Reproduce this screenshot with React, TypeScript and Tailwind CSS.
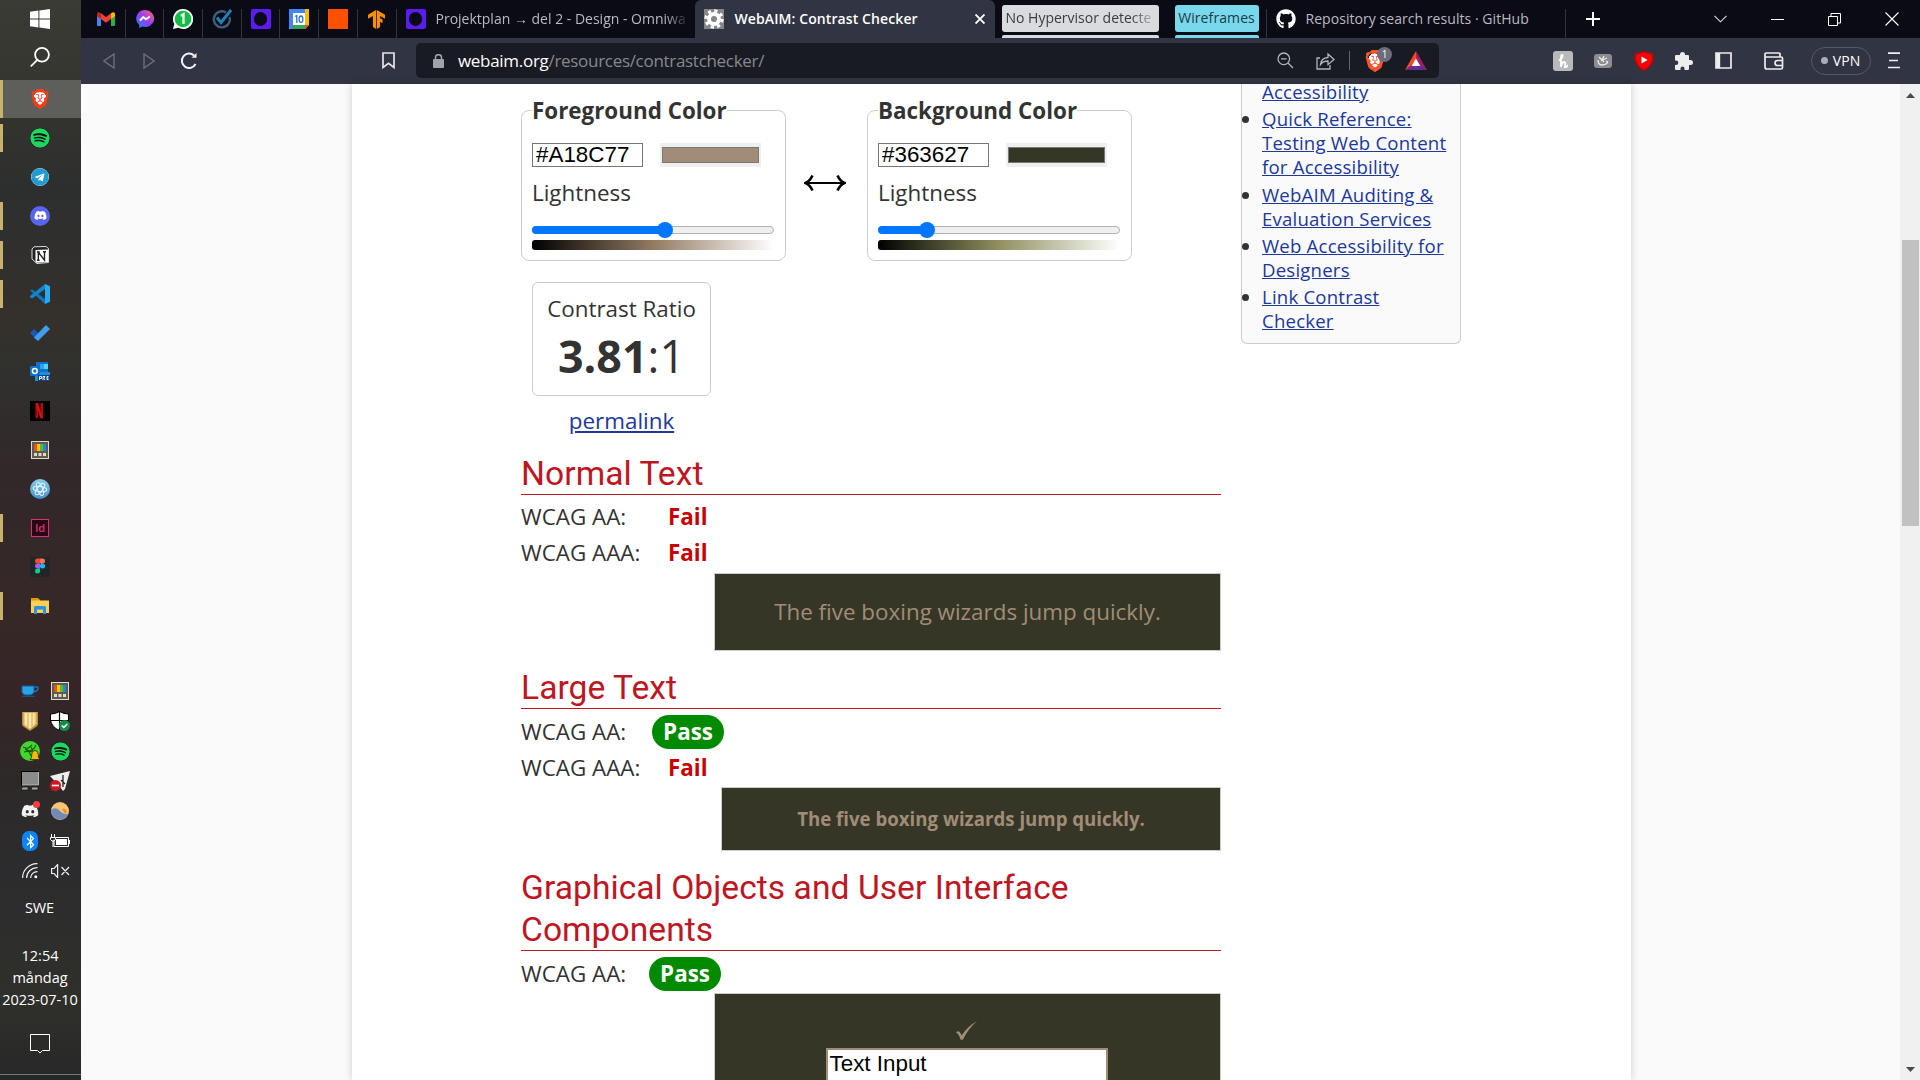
import type { ReactNode } from "react";
import { FaSpotify, FaTelegram, FaDiscord, FaGithub, FaBluetoothB } from "react-icons/fa";
import { SiBrave, SiTensorflow } from "react-icons/si";

/* ---------- taskbar icons ---------- */

const VsCode = () => (
  <svg width="20" height="20" viewBox="0 0 20 20">
    <path d="M0 6.600 2.200 5.400 15 15v5z" fill="#0a76c0" />
    <path d="M15 0v5L2.200 14.600 0 13.300V12z" fill="#1186d0" />
    <path d="M15 0l5 2.300v15.400L15 20z" fill="#29a9f3" />
  </svg>
);
const Todo = () => (
  <svg width="20" height="16" viewBox="0 0 20 16">
    <path d="M0 8l4-4 7 7-4 4.500z" fill="#1c57b8" />
    <path d="M4 12.500 16 0l4 4L8 16z" fill="#409fec" />
  </svg>
);
const Outlook = () => (
  <svg width="20" height="20" viewBox="0 0 20 20">
    <path d="M6 0h12v11H6z" fill="#1470c4" />
    <path d="M10 2h4v5h-4z" fill="#2aa6ea" />
    <path d="M14 2h4v5h-4z" fill="#55d0fb" />
    <path d="M5 10h15v9H5z" fill="#1a8fe0" />
    <rect y="4" width="10" height="10" rx="1" fill="#0f6fd0" />
    <circle cx="4.800" cy="9" r="2.400" fill="none" stroke="#fff" strokeWidth="1.500" />
    <rect x="8" y="13" width="12" height="6" fill="#123f80" />
    <path d="M9.500 18v-3.500h2v2h-2M13 18v-3.500h2l-1 2 1 1.500M18.500 14.500h-1.500v3h1.500M17 16h1.500" stroke="#fff" fill="none" strokeWidth=".9" />
  </svg>
);
const Netflix = () => (
  <svg width="20" height="20" viewBox="0 0 20 20">
    <path d="M0 0h20v20H0z" fill="#000" />
    <path d="M5.500 2H8v15l-2.500.4zM10.500 2H13v15.400L10.500 17z" fill="#b1060f" />
    <path d="M5.500 2H8l5 15.400-2.700-.4z" fill="#e50914" />
  </svg>
);
const PowerToys = () => (
  <svg width="18" height="18" viewBox="0 0 18 18">
    <path d="M0 0h18v18H0z" fill="#e5d9bf" />
    <path d="M1 1h16v16H1z" fill="#5d5a58" />
    <path d="M3 3h3v7H3z" fill="#e8501c" />
    <path d="M6 3h3v7H6z" fill="#fdc800" />
    <path d="M9 3h3v7H9z" fill="#62b82b" />
    <path d="M12 3h3v7h-3z" fill="#1b8be0" />
    <path d="M3 12h3v3H3zM7.500 12h3v3h-3zM12 12h3v3h-3z" fill="#e5d9bf" />
  </svg>
);
const Atom = () => (
  <svg width="20" height="20" viewBox="0 0 20 20">
    <defs>
      <linearGradient id="atom" x2="0" y2="1">
        <stop stopColor="#86cdee" />
        <stop offset="1" stopColor="#4a90cc" />
      </linearGradient>
    </defs>
    <circle cx="10" cy="10" r="10" fill="url(#atom)" />
    <g fill="none" stroke="#e4f4fc" strokeWidth="1">
      <ellipse cx="10" cy="10" rx="6.800" ry="2.600" transform="rotate(8 10 10)" />
      <ellipse cx="10" cy="10" rx="6.800" ry="2.600" transform="rotate(68 10 10)" />
      <ellipse cx="10" cy="10" rx="6.800" ry="2.600" transform="rotate(128 10 10)" />
    </g>
  </svg>
);
const InDesign = () => (
  <div className="flex h-[18px] w-[18px] items-center justify-center border border-[#d6327b] bg-[#2a0613] font-['Open_Sans'] text-[11px] leading-none font-semibold text-[#d6327b]">
    Id
  </div>
);
const Figma = () => (
  <svg width="20" height="20" viewBox="0 0 20 20">
    <path d="M0 0h20v20H0z" fill="#232626" />
    <path d="M10 1.500H7.500a2.500 2.500 0 000 5H10z" fill="#f24e1e" />
    <path d="M10 1.500h2.500a2.500 2.500 0 010 5H10z" fill="#ff7262" />
    <path d="M10 6.500H7.500a2.500 2.500 0 000 5H10z" fill="#a259ff" />
    <circle cx="12.500" cy="9" r="2.500" fill="#1abcfe" />
    <path d="M7.500 11.500H10V14a2.500 2.500 0 11-2.500-2.500z" fill="#0acf83" />
  </svg>
);
const Explorer = () => (
  <svg width="18" height="16" viewBox="0 0 18 16">
    <path d="M0 0h7l2 2v3H0z" fill="#e39a04" />
    <path d="M0 2.500h18V15H0z" fill="#fdd055" />
    <path d="M3 16V9l1-1h10l1 1v7h-3v-4.500H6V16z" fill="#2f8fe0" />
  </svg>
);
const NotionTile = () => (
  <svg width="18" height="18" viewBox="0 0 18 18">
    <path d="M1 3 3 .8 15 .5l2.500 2V16.500L6 17.500 1 13z" fill="#222" stroke="#ddd" strokeWidth="1" />
    <path d="M4.500 4 17 3.400V16L4.500 16.700z" fill="#fff" />
    <path d="M7.300 14.300V6.200l6.200 8V5.800M6 6h2.800M12 5.800h3M6 14.200h2.600" stroke="#222" strokeWidth="1.400" fill="none" />
  </svg>
);
const Cup = () => (
  <svg width="18" height="12" viewBox="0 0 18 12">
    <path d="M1 1h12v4a5 4 0 01-4 5H5a4 4 0 01-4-5z" fill="#27a4e8" stroke="#115e9e" />
    <path d="M13.500 2h2.500q1.500 0 1 2t-4.500 3" fill="none" stroke="#1778bd" strokeWidth="1.300" />
    <path d="M1 11.300h13" stroke="#115e9e" />
  </svg>
);
const GoldShield = () => (
  <svg width="16" height="20" viewBox="0 0 16 20">
    <path d="M0 1h16v12q0 2-2 3l-6 4-6-4q-2-1-2-3z" fill="#b98b3a" />
    <path d="M1.500 1.500h13V13L8 18.500 1.500 14z" fill="#edc673" />
    <path d="M3 2h2v12.500L3 13.500zM7 2h2v15H7zM11 2h1.500v12H11z" fill="#fbe8b4" />
  </svg>
);
const Defender = () => (
  <svg width="20" height="20" viewBox="0 0 20 20">
    <path d="M9.500.5q4 2.500 9 2.500v6q-1 7-9 10.500-8-3.500-9-10.500V3q5 0 9-2.500z" fill="#fff" stroke="#000" />
    <path d="M9.500 0v19M0 9.500h19" stroke="#000" strokeWidth="1.200" />
    <circle cx="14.500" cy="14.500" r="5.500" fill="#178a4a" />
    <path d="M11.800 14.500l2 2 3.500-3.600" stroke="#fff" fill="none" strokeWidth="1.500" />
  </svg>
);
const Razer = () => (
  <svg width="20" height="20" viewBox="0 0 20 20">
    <circle cx="10" cy="10" r="10" fill="#44d62c" />
    <path d="M3 6l4 1.500 2-1 3-2.500M16 4l-2 3.500-4 2.500-5-2M4 11l5-1 2 5M11 6l2 4M6 9l3 2 4-1" stroke="#145c0c" strokeWidth="1.100" fill="none" />
    <path d="M10 18.500l1.500-2q0-7 3.500-7t3.500 7l1.500 2z" fill="#fbb908" stroke="#222" strokeWidth=".8" />
  </svg>
);
const Computer = () => (
  <svg width="18" height="20" viewBox="0 0 18 20">
    <path d="M.5.5h17v14H.5z" fill="#8b8b8b" stroke="#000" />
    <path d="M1 14h16.500V1" stroke="#b5b5b5" fill="none" />
    <path d="M1.500 16h5.500v3H0zM11 16h6v3h-7z" fill="#a0a0a0" stroke="#111" strokeWidth=".7" />
  </svg>
);
const Blocked = () => (
  <svg width="20" height="20" viewBox="0 0 20 20">
    <path d="M0 5 20 0l-5 18-2 2-3-4z" fill="#eee" />
    <path d="M13 4v12M11 9l4 4" stroke="#222" strokeWidth="1.300" />
    <circle cx="5.500" cy="14.500" r="5.500" fill="#cf1827" />
    <path d="M2 14.500h7" stroke="#fff" strokeWidth="1.600" />
  </svg>
);
const DiscordTray = () => (
  <div className="relative">
    <FaDiscord size={18} color="#f2f2f2" />
    <div className="absolute -top-px -right-px h-[7px] w-[7px] rounded-full bg-[#f0413f]" />
  </div>
);
const Weather = () => (
  <svg width="18" height="18" viewBox="0 0 18 18">
    <circle cx="9" cy="9" r="9" fill="#f6c473" />
    <path d="M11 7q4-1 5 3l-2 2z" fill="#ee9030" />
    <path d="M0 8q5-4 9 1t8.500 2.500A9 9 0 010 8z" fill="#7289b9" />
  </svg>
);
const Bluetooth = () => (
  <div className="flex h-5 w-4 items-center justify-center rounded-[7px] bg-[#0a84ff]">
    <FaBluetoothB size={15} color="#fff" />
  </div>
);
const Battery = () => (
  <svg width="20" height="14" viewBox="0 0 20 14">
    <path d="M4 5.500V12.500h14.500v-9H6" fill="none" stroke="#fff" />
    <path d="M6 5h11v6H6zM19 6h1v4h-1z" fill="#fff" />
    <path d="M1.500 0v3M4.500 0v3M.5 3.500h5v2l-1.500 1.500h-2L.5 5.500zM3 7v6" stroke="#fff" fill="none" />
  </svg>
);
const Wifi = () => (
  <svg width="16" height="16" viewBox="0 0 16 16" fill="none" stroke="#eee" strokeWidth="1.200">
    <path d="M.6 15A14.400 14.400 0 0115.500.6M4.600 15A10.500 10.500 0 0115.500 4.600M8.600 15A6.500 6.500 0 0115.500 8.600" />
    <circle cx="13.800" cy="13.800" r="1.500" fill="#fff" stroke="none" />
  </svg>
);
const Mute = () => (
  <svg width="19" height="14" viewBox="0 0 19 14" fill="none" stroke="#eee" strokeWidth="1.200">
    <path d="M.6 4.500h2.500l3.500-4v13l-3.500-4H.6zM10.500 3l7.500 8M18 3l-7.500 8" />
  </svg>
);

const apps: { icon: ReactNode; open?: boolean }[] = [
  { icon: <FaSpotify size={20} color="#1ed760" className="rounded-full bg-[#111]" />, open: true },
  {
    icon: (
      <div className="flex h-[18px] w-[18px] rounded-full bg-white">
        <FaTelegram size={18} color="#229bd5" />
      </div>
    ),
  },
  {
    icon: (
      <div className="flex h-5 w-5 items-center justify-center rounded-full bg-[#5865f2]">
        <FaDiscord size={13} color="#fff" />
      </div>
    ),
    open: true,
  },
  { icon: <NotionTile />, open: true },
  { icon: <VsCode />, open: true },
  { icon: <Todo /> },
  { icon: <Outlook /> },
  { icon: <Netflix /> },
  { icon: <PowerToys /> },
  { icon: <Atom /> },
  { icon: <InDesign />, open: true },
  { icon: <Figma /> },
  { icon: <Explorer />, open: true },
];

const tray: ReactNode[] = [
  <Cup />, <PowerToys />, <GoldShield />, <Defender />, <Razer />,
  <FaSpotify size={19} color="#1ed760" className="rounded-full bg-[#111]" />,
  <Computer />, <Blocked />, <DiscordTray />, <Weather />, <Bluetooth />, <Battery />, <Wifi />, <Mute />,
];

function Taskbar() {
  return (
    <aside className="flex h-full w-[81px] shrink-0 flex-col bg-[linear-gradient(180deg,#3b3b36_0px,#32332d_130px,#2d2f2f_190px,#35302b_330px,#30312e_370px,#32282a_470px,#362827_620px,#362526_690px,#2e2929_780px,#2c2c2e_870px,#2f2f2a_1010px,#262828_1080px)] font-['Open_Sans',sans-serif] text-white">
      <div className="flex h-[38px] items-center justify-center pr-px">
        <svg width="20" height="20" viewBox="0 0 20 20" fill="#fff">
          <path d="M0 2.800 8.400 1.600V9.500H0zM9.400 1.500 20 0v9.500H9.400zM0 10.500h8.400v7.900L0 17.200zM9.400 10.500H20V20L9.400 18.500z" />
        </svg>
      </div>
      <div className="mb-[5px] flex h-[37px] items-center justify-center pr-px">
        <svg width="20" height="20" viewBox="0 0 20 20" fill="none" stroke="#fff" strokeWidth="1.800">
          <circle cx="12" cy="7.800" r="6.900" />
          <path d="M7.300 12.800.8 19.300" />
        </svg>
      </div>
      <div className="flex h-[38px] items-center bg-[#5e5f5b]">
        <div className="h-full w-[3px] bg-[#c9b26f]" />
        <div className="flex flex-1 justify-center pr-[4px]">
          <div className="flex h-5 w-4 items-center justify-center bg-[radial-gradient(#fff_55%,transparent_56%)]">
            <SiBrave size={20} color="#fb3a17" className="shrink-0" />
          </div>
        </div>
      </div>
      {apps.map((a, i) => (
        <div key={i} className="flex h-[39px] items-center">
          <div className={a.open ? "h-7 w-[3px] bg-[#c9b26f]" : "h-7 w-[3px]"} />
          <div className="flex flex-1 justify-center pr-[4px]">{a.icon}</div>
        </div>
      ))}
      <div className="mt-[51px] ml-[15px] grid w-[60px] grid-cols-2">
        {tray.map((t, i) => (
          <div key={i} className="flex h-[30px] items-center justify-center">
            {t}
          </div>
        ))}
      </div>
      <div className="mt-[11px] h-[22px] pr-[2px] text-center text-[14.5px] leading-[22px] tracking-[-0.1px]">SWE</div>
      <div className="mt-[26px] pr-px text-center text-[14.5px] leading-[22px] whitespace-nowrap">
        12:54
        <br />
        måndag
        <br />
        2023-07-10
      </div>
      <div className="mt-[23px] flex justify-center pr-px">
        <svg width="20" height="20" viewBox="0 0 20 20" fill="none" stroke="#fff">
          <path d="M.5.5h19v16H12.500L10 19l-2.500-2.500H.5z" />
        </svg>
      </div>
      <div className="mt-5 h-px bg-[#777]" />
    </aside>
  );
}

/* ---------- browser chrome ---------- */

const Omni = () => (
  <div className="flex h-5 w-5 shrink-0 items-center justify-center rounded-[2px] bg-[#5b1bf5]">
    <div className="h-[14px] w-[13px] rounded-full bg-[#0b0b16]" />
  </div>
);
const Gmail = () => (
  <svg width="18" height="14" viewBox="0 0 18 14">
    <path d="M0 2v11q0 1 1 1h3V5z" fill="#4285f4" />
    <path d="M18 2v11q0 1-1 1h-3V5z" fill="#34a853" />
    <path d="M14 1.200q4-2.500 4 1.300v1.700L14 7z" fill="#fbbc04" />
    <path d="M0 2.500Q0-1.300 4 1.200V7L0 4.200z" fill="#c5221f" />
    <path d="M4 1.200 9 5l5-3.800V7l-5 3.800L4 7z" fill="#ea4335" />
  </svg>
);
const Messenger = () => (
  <svg width="18" height="18" viewBox="0 0 18 18">
    <defs>
      <linearGradient id="msg" x1="0" y1="1" x2="1" y2="0">
        <stop stopColor="#1688ff" />
        <stop offset=".5" stopColor="#9a3cf6" />
        <stop offset="1" stopColor="#ff6a62" />
      </linearGradient>
    </defs>
    <path d="M9 0a9 8.500 0 11-2.600 16.600L3.300 18v-3A8.500 8.500 0 019 0z" fill="url(#msg)" />
    <path d="M4 10.500 7.300 7l2.700 2.300L13.800 6.500" stroke="#fff" strokeWidth="1.900" fill="none" />
  </svg>
);
const WhatsApp = () => (
  <svg width="20" height="20" viewBox="0 0 20 20">
    <path d="M10 0a10 10 0 11-4.600 18.800L0 20l1.300-5A10 10 0 0110 0z" fill="#f2fff5" />
    <circle cx="10" cy="10" r="8.300" fill="#17bb47" />
    <path d="M7.800 6.800 10.500 5v10" stroke="#fff" strokeWidth="2.200" fill="none" />
  </svg>
);
const CheckRing = () => (
  <svg width="20" height="20" viewBox="0 0 20 20" fill="none">
    <path d="M14 3.500A8 8 0 1017.500 8" stroke="#3e5f77" strokeWidth="2.400" />
    <path d="M5 8.500l4 5L19 1" stroke="#2180b4" strokeWidth="3" />
  </svg>
);
const Calendar = () => (
  <svg width="20" height="20" viewBox="0 0 20 20">
    <path d="M0 0h20v16l-4 4H0z" fill="#fff" />
    <path d="M0 0h16v4H4v16H1q-1 0-1-1z" fill="#4285f4" />
    <path d="M16 0h3q1 0 1 1v15h-4z" fill="#fbbc04" />
    <path d="M4 16h12v4H4z" fill="#34a853" />
    <path d="M16 16h4l-4 4z" fill="#ea4335" />
    <path d="M6 7.500 7.800 6.500v7.500" stroke="#2a6fe0" strokeWidth="1.300" fill="none" />
    <ellipse cx="12" cy="10.200" rx="1.900" ry="3.200" stroke="#2a6fe0" strokeWidth="1.300" fill="none" />
  </svg>
);

const pinned: ReactNode[] = [
  <Gmail />, <Messenger />, <WhatsApp />, <CheckRing />, <Omni />, <Calendar />,
  <div className="h-5 w-5 bg-[#ff4f00]" />,
  <SiTensorflow size={19} color="#ff8f00" />,
];

function Tabs() {
  return (
    <div className="flex h-[38px] items-stretch overflow-hidden bg-[#0b0b16] font-['Open_Sans',sans-serif] text-[14px] whitespace-nowrap">
      <div className="flex pl-[6px]">
        {pinned.map((p, i) => (
          <div key={i} className="flex w-[38.7px] items-center">
            <div className="flex flex-1 items-center justify-center">{p}</div>
            <div className="mt-[9px] h-[29px] w-px bg-[#33343d]" />
          </div>
        ))}
      </div>
      <div className="flex w-[298px] items-center pl-[9px]">
        <Omni />
        <div className="mb-[2px] ml-[10px] w-[254px] overflow-hidden text-[14px] text-[#b9b9c1] [mask-image:linear-gradient(90deg,#000_90%,transparent)]">
          Projektplan → del 2 - Design - Omniwa
        </div>
      </div>
      <div className="flex w-[300px] items-center rounded-t-[6px] bg-[#313442] pl-[9px] text-white">
        <div className="flex h-5 w-5 items-center justify-center bg-[#858585]">
          <svg width="20" height="20" viewBox="0 0 20 20">
            <circle cx="10" cy="10" r="5" fill="none" stroke="#fff" strokeWidth="4" />
            <circle cx="10" cy="10" r="8.200" fill="none" stroke="#fff" strokeWidth="3" strokeDasharray="3.200 3.240" />
          </svg>
        </div>
        <span className="mb-[2px] ml-[11px] w-[184px] text-[14px] font-semibold tracking-[0.1px]">WebAIM: Contrast Checker</span>
        <svg width="10" height="10" viewBox="0 0 10 10" className="ml-[56px]" stroke="#fff" strokeWidth="1.900">
          <path d="M.5.5l9 9M9.500.5l-9 9" />
        </svg>
      </div>
      <div className="ml-[7px] flex w-[157px] flex-col pt-[5px] text-[#3b3b40]">
        <div className="h-[27px] rounded-[3px] bg-[#dadbdf] pl-1 text-[14px] leading-[26px]">
          <div className="w-[153px] [mask-image:linear-gradient(90deg,#000_82%,transparent)]">No Hypervisor detecte</div>
        </div>
        <div className="mt-[3px] h-[3px] rounded-t-[2px] bg-[#dadbdf]" />
      </div>
      <div className="ml-4 flex w-[84px] flex-col pt-[5px]">
        <div className="h-[27px] rounded-[3px] bg-[#78d9ec] text-center text-[14px] leading-[26px] tracking-[0.1px] text-[#1c3c44]">Wireframes</div>
        <div className="mt-[3px] h-[3px] rounded-t-[2px] bg-[#78d9ec]" />
      </div>
      <div className="ml-[7px] flex items-center">
        <div className="mt-[9px] h-[29px] w-px bg-[#33343d]" />
        <FaGithub size={20} color="#fff" className="ml-[9px]" />
        <span className="mb-[2px] ml-[10px] w-[259px] text-[14px] tracking-[0.05px] text-[#b9b9c1]">Repository search results · GitHub</span>
        <div className="mt-[9px] h-[29px] w-px bg-[#33343d]" />
      </div>
      <div className="flex flex-1 items-center text-white">
        <svg width="14" height="14" viewBox="0 0 14 14" className="ml-5" stroke="#fff" strokeWidth="2">
          <path d="M7 0v14M0 7h14" />
        </svg>
        <svg width="13" height="8" viewBox="0 0 13 8" className="ml-[114px]" fill="none" stroke="#ddd" strokeWidth="1.100">
          <path d="M.5.8l6 6 6-6" />
        </svg>
        <div className="ml-[44px] h-px w-[13px] bg-white" />
        <svg width="13" height="13" viewBox="0 0 13 13" className="ml-[44px]" fill="none" stroke="#fff">
          <path d="M.5 3.500h9v9h-9zM3 3V.5h9.500v9.500H10" />
        </svg>
        <svg width="14" height="14" viewBox="0 0 14 14" className="ml-[44px]" stroke="#fff" strokeWidth="1.100">
          <path d="M.5.5l13 13M13.500.5l-13 13" />
        </svg>
      </div>
    </div>
  );
}

function Toolbar() {
  return (
    <div className="flex h-[46px] items-center bg-[#313442] pb-px font-['Open_Sans',sans-serif]">
      <div className="flex w-[335px] items-center pl-[22px]">
        <svg width="12" height="16" viewBox="0 0 12 16" fill="none" stroke="#6c6f7b" strokeWidth="1.400">
          <path d="M11 1v14L1 8z" />
        </svg>
        <svg width="12" height="16" viewBox="0 0 12 16" fill="none" stroke="#6c6f7b" strokeWidth="1.400" className="ml-[28px]">
          <path d="M1 1v14l10-7z" />
        </svg>
        <svg width="18" height="18" viewBox="0 0 18 18" fill="none" stroke="#f0f0f4" strokeWidth="2" className="ml-[25px]">
          <path d="M14 3.500A7.200 7.200 0 1015.500 12" />
          <path d="M11.500 5.800h5V1z" fill="#f0f0f4" stroke="none" />
        </svg>
        <svg width="13" height="17" viewBox="0 0 13 17" fill="none" stroke="#e4e4e8" strokeWidth="1.700" className="ml-[184px]">
          <path d="M1 1h11v14.500l-5.500-4.200L1 15.500z" />
        </svg>
      </div>
      <div className="flex h-[35px] w-[1023px] items-center rounded-[5px] bg-[#191b22]">
        <svg width="11" height="14" viewBox="0 0 11 14" className="ml-[17px]">
          <rect y="5" width="11" height="9" rx="1" fill="#a0a2aa" />
          <path d="M2.500 6V3.500a3 2.800 0 016 0V6" stroke="#a0a2aa" fill="none" strokeWidth="1.500" />
        </svg>
        <div className="ml-[14px] flex-1 text-[17px] tracking-[-0.3px] text-[#868890]">
          <span className="text-white">webaim.org</span>/resources/contrastchecker/
        </div>
        <svg width="17" height="17" viewBox="0 0 17 17" fill="none" stroke="#b4b5bc" strokeWidth="1.300">
          <circle cx="6.800" cy="6.800" r="5.800" />
          <path d="M11 11l5 5M4 6.800h5.600" />
        </svg>
        <svg width="19" height="18" viewBox="0 0 19 18" fill="none" stroke="#b4b5bc" strokeWidth="1.300" className="ml-[22px]">
          <path d="M4 6H1v11h13v-4M4.500 12.500Q5 6 12 5.500V2l6 5.500-6 5.200V9Q7 9 4.500 12.500z" />
        </svg>
        <div className="ml-[14px] h-[19px] w-px bg-[#63656d]" />
        <div className="relative ml-[15px] flex h-[22px] w-[19px] items-center justify-center bg-[radial-gradient(#fff_48%,transparent_50%)]">
          <SiBrave size={22} color="#fb542b" className="shrink-0" />
          <div className="absolute -top-[3px] -right-[8px] flex h-[15px] w-[15px] items-center justify-center rounded-full bg-[#6b6d7c] text-[10px] leading-none text-white">1</div>
        </div>
        <svg width="22" height="19" viewBox="0 0 22 19" className="mr-3 ml-[21px]">
          <path d="M11 0 0 19l11-6.500z" fill="#ff4724" />
          <path d="M11 0l11 19-11-6.500z" fill="#9e1f63" />
          <path d="M0 19h22l-11-8z" fill="#662d91" />
          <path d="M11 7.500 15.300 15H6.700z" fill="#fff" />
        </svg>
      </div>
      <div className="ml-[114px] flex items-center">
        <div className="flex h-5 w-5 items-center justify-center rounded-[3px] bg-[#b9b9b9]">
          <svg width="10" height="14" viewBox="0 0 10 14" fill="none" stroke="#fff" strokeWidth="1.800">
            <path d="M1 6.500Q5 4 4.500 1 3 0 3 5v8q1-5 3-5t1 4 3-1" />
          </svg>
        </div>
        <div className="ml-[21px] flex h-[14px] w-[18px] items-center justify-center rounded-[3px] bg-[#8d8d8f]">
          <svg width="12" height="11" viewBox="0 0 12 11" fill="none" stroke="#eee" strokeWidth="1.300">
            <path d="M2 2l5 5M7 1 5 5l5-2M1 5q0 5 4 5t6-3M9 6l2 1" />
          </svg>
        </div>
        <svg width="20" height="20" viewBox="0 0 20 20" className="ml-[22px]">
          <path d="M10 0l9.500 3v5q-1 8-9.500 12Q1.500 16 .5 8V3z" fill="#c50000" />
          <path d="M10 1.500l8 2.500v4q-1 7-8 10.500Q3 15 2 8V4z" fill="#f50505" />
          <path d="M7.500 5.500v7l6-3.500z" fill="#fff" />
        </svg>
        <svg width="19" height="18" viewBox="0 0 19 18" fill="#ededf0" className="ml-[20px]">
          <path d="M6 3V2.500a2.500 2.500 0 015 0V3h3q1 0 1 1v4h1.500a2.500 2.500 0 010 5H15v4q0 1-1 1h-3.500v-1.500a2 2 0 00-4 0V18H2q-1 0-1-1v-4h1a2.300 2.300 0 000-4.600H1V4q0-1 1-1z" />
        </svg>
        <svg width="17" height="17" viewBox="0 0 17 17" fill="none" stroke="#ededf0" strokeWidth="1.700" className="ml-[22px]">
          <path d="M1 1h15v15H1z" />
          <path d="M3.200 1v15" strokeWidth="4" />
        </svg>
        <svg width="20" height="18" viewBox="0 0 20 18" fill="none" stroke="#ededf0" strokeWidth="1.700" className="ml-[32px]">
          <path d="M16 5V2q0-1-1-1H2Q1 1 1 2v13q0 2 2 2h14q1.500 0 1.500-1.500V6q0-1-1.500-1H1M19 8.500h-5.500a2.300 2.300 0 000 5H19" />
        </svg>
        <div className="ml-[27px] flex h-[28px] w-[60px] items-center justify-center gap-[5px] rounded-full border border-[#55586a] pr-px text-[14px] tracking-[0.1px] text-white">
          <div className="h-[7px] w-[7px] rounded-full bg-[#abacba]" />
          VPN
        </div>
        <svg width="12" height="17" viewBox="0 0 12 17" stroke="#f0f0f4" strokeWidth="1.700" className="ml-[17px]">
          <path d="M0 1.200h12M1 8.500h9M0 15.500h12" />
        </svg>
      </div>
    </div>
  );
}

/* ---------- page ---------- */

function ColorField({ title, value, swatch, ramp, filled }: { title: string; value: string; swatch: string; ramp: string; filled: string }) {
  return (
    <fieldset className="h-[169px] w-[265px] rounded-[8px] border border-[#ccc] px-[10px]">
      <legend className="h-9 leading-[37px] font-bold whitespace-nowrap">{title}</legend>
      <div className="mt-[15px] flex">
        <div className="h-6 w-[111px] border border-[#767676] pl-[3px] font-['Liberation_Sans',sans-serif] leading-[21px] text-black">{value}</div>
        <div className="ml-[17px] h-6 w-[101px] bg-[#efefef] px-[2px] py-1">
          <div className={`h-4 border border-[#777] ${swatch}`} />
        </div>
      </div>
      <div className="mt-[8px] leading-9">Lightness</div>
      <div className="mt-[15px] flex h-2 w-[242px] items-center rounded-full border border-[#b2b2b2] bg-[#efefef]">
        <div className={`-ml-px h-2 shrink-0 rounded-l-full bg-[#0075ff] ${filled}`} />
        <div className="-ml-2 h-4 w-4 shrink-0 rounded-full bg-[#0075ff]" />
      </div>
      <div className={`mt-[6px] h-[10px] w-[242px] rounded-[3px] ${ramp}`} />
    </fieldset>
  );
}

const Heading = ({ children }: { children: ReactNode }) => (
  <h2 className="border-b border-[#be1622] font-['Roboto',sans-serif] text-[33.600px] leading-[42px] tracking-[0.05px] text-[#be1622]">
    <span className="block translate-y-px">{children}</span>
  </h2>
);

function Row({ label, pass, pad = "pl-[131px]" }: { label: string; pass?: boolean; pad?: string }) {
  return (
    <div className="flex h-9 items-center">
      <span className="w-0 whitespace-nowrap">{label}</span>
      {pass ? (
        <div className={pad}>
          <b className="flex h-[34px] w-[72px] items-center justify-center rounded-[17px] bg-[#008a00] text-white">Pass</b>
        </div>
      ) : (
        <b className="ml-[147px] text-[#c90000]">Fail</b>
      )}
    </div>
  );
}

const links = ["Quick Reference: Testing Web Content for Accessibility", "WebAIM Auditing & Evaluation Services", "Web Accessibility for Designers", "Link Contrast Checker"];

function Page() {
  return (
    <div className="flex min-h-0 flex-1 bg-[#fafafa]">
      <main className="ml-[271px] flex w-[1279px] shrink-0 items-start overflow-hidden bg-white pl-[169px] font-['Open_Sans',sans-serif] text-[22.400px] text-[#333] shadow-[0_0_8px_rgba(0,0,0,0.18)]">
        <div className="w-[700px] pt-2">
          <div className="flex">
            <ColorField title="Foreground Color" value="#A18C77" swatch="bg-[#a18c77]" ramp="bg-[linear-gradient(90deg,#000,#937a62_50%,#fff)]" filled="w-[133px]" />
            <svg width="42" height="18" viewBox="0 0 42 18" fill="none" stroke="#000" className="mt-[82px] mr-[21px] ml-[18px]" strokeWidth="2.200">
              <path d="M2 9h38" />
              <path d="M8.500 1.500Q6 7 1.500 9 6 11 8.500 16.500M33.500 1.500Q36 7 40.500 9 36 11 33.500 16.500" strokeWidth="2.600" />
            </svg>
            <ColorField title="Background Color" value="#363627" swatch="bg-[#363627]" ramp="bg-[linear-gradient(90deg,#000,#90905f_50%,#fff)]" filled="w-[49px]" />
          </div>
          <div className="mt-[21px] ml-[11px] h-[114px] w-[179px] rounded-[6px] border border-[#ccc] text-center">
            <div className="mt-2 leading-9">Contrast Ratio</div>
            <div className="text-[44.800px] leading-[58px]">
              <b>3.81</b>:1
            </div>
          </div>
          <div className="mt-[7px] ml-[11px] w-[179px] text-center leading-9 text-[#20379b]">
            <span className="underline">permalink</span>
          </div>
          <div className="mt-[13px]">
            <Heading>Normal Text</Heading>
          </div>
          <div className="pt-[4px]">
            <Row label="WCAG AA:" />
            <Row label="WCAG AAA:" />
          </div>
          <div className="mt-[2px] ml-[193px] flex h-[78px] items-center justify-center border border-[#ccc] bg-[#363627] text-[#a18c77]">The five boxing wizards jump quickly.</div>
          <div className="mt-[15px]">
            <Heading>Large Text</Heading>
          </div>
          <div className="pt-[5px]">
            <Row label="WCAG AA:" pass />
            <Row label="WCAG AAA:" />
          </div>
          <div className="mt-px ml-[200px] flex h-[64px] items-center justify-center border border-[#ccc] bg-[#363627] text-[18.660px] font-bold text-[#a18c77]">The five boxing wizards jump quickly.</div>
          <div className="mt-[15px]">
            <Heading>
              Graphical Objects and User Interface
              <br />
              Components
            </Heading>
          </div>
          <div className="pt-[5px]">
            <Row label="WCAG AA:" pass pad="pl-[128px]" />
          </div>
          <div className="mt-px ml-[193px] flex h-[200px] flex-col items-center border border-[#ccc] bg-[#363627] pt-[27px] pr-[2px]">
            <svg width="21" height="19" viewBox="0 0 21 19" className="mb-2" fill="#a18c77">
              <path d="M0 11.500q3-3 5 1.500l.5 1.500Q12 5 21 0 12 8 7 18.500q-1.500.5-2.500 0Q3 13 0 11.500z" />
            </svg>
            <div className="h-[60px] w-[282px] border-2 border-[#a18c77] bg-white pl-[2px] font-['Liberation_Sans',sans-serif] leading-[28px] text-black">Text Input</div>
          </div>
        </div>
        <nav className="ml-[20px] h-[260px] w-[220px] rounded-b-[6px] border border-t-0 border-[#ccc] bg-[#fafafa] pl-5 text-[18.600px] leading-[23.900px] tracking-[0.2px] text-[#20379b]">
          <a className="-mt-[4px] block underline">Accessibility</a>
          {links.map((l) => (
            <div key={l} className="relative mt-[3.500px] w-[188px]">
              <div className="absolute top-[9px] -left-5 h-[7px] w-[7px] rounded-full bg-[#333]" />
              <a className="underline">{l}</a>
            </div>
          ))}
        </nav>
      </main>
      <div className="ml-auto flex w-5 flex-col items-center bg-[#f0f0f0] pt-[9px]">
        <svg width="9" height="5" viewBox="0 0 9 5" fill="#4a4a4a">
          <path d="M4.500 0 9 5H0z" />
        </svg>
        <div className="mt-[142px] h-[286px] w-[17px] bg-[#c1c1c1]" />
        <svg width="9" height="5" viewBox="0 0 9 5" fill="#4a4a4a" className="mt-auto mb-2">
          <path d="M0 0h9L4.500 5z" />
        </svg>
      </div>
    </div>
  );
}

export default function App() {
  return (
    <div className="flex h-[1080px] w-[1920px] overflow-hidden bg-white">
      <Taskbar />
      <div className="flex min-w-0 flex-1 flex-col">
        <Tabs />
        <Toolbar />
        <Page />
      </div>
    </div>
  );
}
